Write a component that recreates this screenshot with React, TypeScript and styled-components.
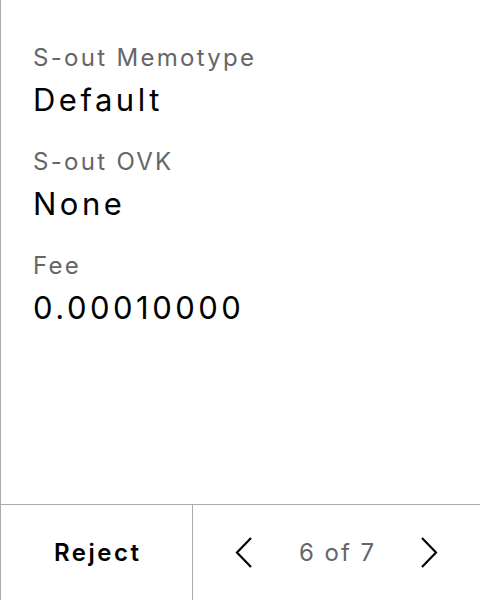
import React from "react";
import styled, { createGlobalStyle } from "styled-components";

const Global = createGlobalStyle`
  html, body {
    margin: 0;
    padding: 0;
    background: #ffffff;
  }
  body {
    font-family: Inter, "Noto Sans", "Liberation Sans", sans-serif;
  }
`;

const S = {
  Page: styled.div`
    min-height: 100vh;
    box-sizing: border-box;
    display: flex;
    flex-direction: column;
    border-left: 1px solid #ababab;
  `,
  Content: styled.div`
    flex: 1;
    display: flex;
    flex-direction: column;
    gap: 26px;
    padding: 42px 32px 0;
  `,
  Item: styled.div`
    display: flex;
    flex-direction: column;
    gap: 6px;
  `,
  Label: styled.div`
    font-size: 24px;
    line-height: 32px;
    letter-spacing: 2.3px;
    color: #666666;
  `,
  Value: styled.div`
    font-size: 31px;
    line-height: 40px;
    letter-spacing: 3.5px;
    color: #000000;
  `,
  Footer: styled.div`
    height: 96px;
    box-sizing: border-box;
    border-top: 1px solid #ababab;
    display: grid;
    grid-template-columns: 192px 1fr;
  `,
  Reject: styled.button`
    border: none;
    border-right: 1px solid #ababab;
    background: transparent;
    font-family: inherit;
    font-size: 24px;
    font-weight: 600;
    letter-spacing: 2.5px;
    text-indent: 2.5px;
    color: #000000;
    padding: 0;
    cursor: pointer;
  `,
  Pager: styled.div`
    display: flex;
    align-items: center;
    justify-content: center;
    gap: 46px;
  `,
  Arrow: styled.button`
    border: none;
    background: transparent;
    padding: 0;
    display: flex;
    cursor: pointer;
  `,
  Count: styled.span`
    font-size: 24px;
    letter-spacing: 2px;
    margin-right: -2px;
    color: #666666;
  `,
};

const Chevron = ({ dir }: { dir: "left" | "right" }) => (
  <svg width="18" height="31" viewBox="0 0 18 31" fill="none">
    <polyline
      points={dir === "left" ? "16,1 2,15.5 16,30" : "2,1 16,15.5 2,30"}
      stroke="#000"
      strokeWidth="2.2"
    />
  </svg>
);

const fields = [
  { label: "S-out Memotype", value: "Default" },
  { label: "S-out OVK", value: "None" },
  { label: "Fee", value: "0.00010000" },
];

const App = () => (
  <>
    <Global />
    <S.Page>
      <S.Content>
        {fields.map((f) => (
          <S.Item key={f.label}>
            <S.Label>{f.label}</S.Label>
            <S.Value>{f.value}</S.Value>
          </S.Item>
        ))}
      </S.Content>
      <S.Footer>
        <S.Reject>Reject</S.Reject>
        <S.Pager>
          <S.Arrow aria-label="previous">
            <Chevron dir="left" />
          </S.Arrow>
          <S.Count>6 of 7</S.Count>
          <S.Arrow aria-label="next">
            <Chevron dir="right" />
          </S.Arrow>
        </S.Pager>
      </S.Footer>
    </S.Page>
  </>
);

export default App;
